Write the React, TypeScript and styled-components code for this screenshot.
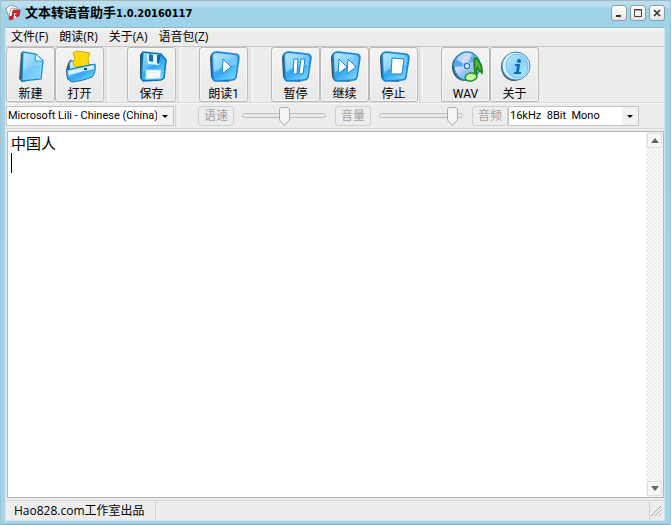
import React, { useState } from "react";
import styled, { createGlobalStyle } from "styled-components";

const GlobalStyle = createGlobalStyle`
  * { box-sizing: border-box; }
  body { margin: 0; background: #9fd2e8; }
  button, select, textarea, input { margin: 0; color: inherit; }
`;

const ui = '"Open Sans", "Noto Sans CJK SC", sans-serif';
const bitmap = 'Roboto, "Noto Sans CJK SC", sans-serif';

const Window = styled.div`
  display: flex;
  flex-direction: column;
  height: 100vh;
  padding: 0 5px 3px 4px;
  border: 1px solid #a4c4d2;
  border-top-color: #a9b4b8;
  border-bottom-color: #8fa5ae;
  border-radius: 3px 3px 2px 2px;
  background: linear-gradient(#b9def0 0, #b9def0 6px, #9ed2e9 7px, #a3d4e9 100%);
  color: #000;
  font: 12px/16px ${ui};
`;

const TitleBar = styled.header`
  display: flex;
  align-items: center;
  flex: none;
  height: 26px;
  padding-bottom: 2px;
`;

const Title = styled.h1`
  display: flex;
  align-items: baseline;
  flex: 1;
  margin: 0 0 0 4px;
  font: bold 13px/20px "Noto Sans CJK SC", sans-serif;
`;

const Version = styled.span`
  font: bold 11px/20px "DejaVu Sans Condensed", "DejaVu Sans", sans-serif;
`;

const WindowButtons = styled.div`
  display: flex;
  gap: 3px;
`;

const WindowButton = styled.button`
  display: grid;
  place-items: center;
  width: 16px;
  height: 16px;
  padding: 0;
  border: 1px solid #8b9da6;
  border-radius: 3px;
  background: linear-gradient(#fff, #e3e5e6);
`;

const Client = styled.main`
  display: flex;
  flex: 1;
  flex-direction: column;
  min-height: 0;
  border: 1px solid #d3e6ee;
  border-top-color: #8bb9cd;
  background: #ececec;
`;

const MenuBar = styled.nav`
  display: flex;
  flex: none;
  gap: 11px;
  height: 19px;
  padding: 0 5px;
  border-bottom: 1px solid #c6c6c6;
  background: linear-gradient(#f9f9f9, #ebebeb 5px);
`;

const MenuItem = styled.button`
  padding: 0;
  border: 0;
  background: none;
  font: 12px/18px ${ui};
`;

const ToolBar = styled.div`
  display: flex;
  flex: none;
  height: 56px;
  border-bottom: 1px solid #d8d8d8;
`;

const Separator = styled.span<{ $gap: number }>`
  align-self: stretch;
  flex: none;
  width: ${(p) => p.$gap}px;
  padding-left: 1px;
  &::before {
    content: "";
    display: block;
    width: 2px;
    height: 100%;
    border-left: 1px solid #d6d6d6;
    border-right: 1px solid #f8f8f8;
  }
`;

const ToolButton = styled.button`
  display: flex;
  flex: none;
  flex-direction: column;
  align-items: center;
  width: 49px;
  height: 55px;
  padding: 2px 0 0;
  border: 1px solid #b9b9b9;
  border-radius: 3px;
  background: linear-gradient(#f4f4f4, #ededed 50%, #e8e8e8);
  box-shadow: inset 0 0 0 1px #f6f6f6;
  font: 12px/20px ${bitmap};
  white-space: nowrap;
  svg { display: block; flex: none; }
`;

const OptionBar = styled.div`
  display: flex;
  align-items: center;
  flex: none;
  height: 26px;
  padding-bottom: 1px;
  border-top: 1px solid #f8f8f8;
  border-bottom: 1px solid #d8d8d8;
`;

const Picker = styled.span<{ $width: number }>`
  display: grid;
  flex: none;
  grid-template-columns: 1fr 16px;
  align-items: center;
  width: ${(p) => p.$width}px;
  height: 20px;
  border: 1px solid #c2c2c2;
  background: #fff;
  select, svg { grid-row: 1; }
  select {
    grid-column: 1 / 3;
    appearance: none;
    width: 100%;
    height: 18px;
    padding: 0 14px 0 1px;
    border: 0;
    outline: 0;
    background: none;
    font: 11px/16px ${bitmap};
  }
  svg { grid-column: 2; pointer-events: none; background: #f2f2f2; }
`;

const MutedButton = styled.button`
  flex: none;
  width: 36px;
  height: 20px;
  padding: 0;
  border: 1px solid #cecece;
  border-radius: 3px;
  background: #ededed;
  color: #a0a0a0;
  font: 12px/16px ${bitmap};
`;

const thumb =
  "url(\"data:image/svg+xml,%3Csvg xmlns='http://www.w3.org/2000/svg' width='11' height='19'%3E%3Cpath d='M2 .5h7l1.500 1.500v11L5.500 18.500 .5 13V2z' fill='%23f5f5f5' stroke='%23a9a9a9'/%3E%3C/svg%3E\")";

const Slider = styled.input`
  flex: none;
  appearance: none;
  width: 84px;
  height: 20px;
  margin: 0 9px 0 8px;
  background: none;
  &::-webkit-slider-runnable-track {
    height: 5px;
    border: 1px solid #bdbdbd;
    border-radius: 3px;
    background: #e9e9e9;
  }
  &::-webkit-slider-thumb {
    appearance: none;
    width: 11px;
    height: 19px;
    margin-top: -7px;
    background: ${thumb} no-repeat;
  }
`;

const Editor = styled.section`
  position: relative;
  display: flex;
  flex: 1;
  min-height: 0;
  margin: 2px 0 0 1px;
  border: 1px solid #b4b4b4;
  background: #fff;
`;

const TextBox = styled.textarea`
  flex: 1;
  min-width: 0;
  padding: 1px 3px;
  border: 0;
  outline: 0;
  resize: none;
  overflow: hidden;
  background: none;
  caret-color: transparent;
  font: 15px/20px ${ui};
`;

const Caret = styled.span`
  position: absolute;
  top: 21px;
  left: 3px;
  width: 1px;
  height: 20px;
  background: #000;
`;

const ScrollTrack = styled.div`
  display: flex;
  flex: none;
  flex-direction: column;
  justify-content: space-between;
  width: 17px;
  padding: 1px;
  background: repeating-conic-gradient(#ededed 0 25%, #f8f8f8 0 50%) 0 0 / 4px 4px;
`;

const ScrollButton = styled.button`
  display: grid;
  place-items: center;
  height: 15px;
  padding: 0;
  border: 1px solid #dedede;
  border-radius: 2px;
  background: #f6f6f6;
`;

const StatusBar = styled.footer`
  display: flex;
  flex: none;
  justify-content: space-between;
  height: 20px;
  margin-top: 2px;
  border-top: 1px solid #d6d6d6;
`;

const StatusText = styled.span`
  padding: 0 10px 0 8px;
  border-right: 1px solid #d0d0d0;
  font: 12px/20px ${ui};
`;

const Grip = styled.span`
  display: flex;
  align-items: flex-end;
  padding: 0 2px 3px 0;
  border-left: 1px solid #d0d0d0;
`;

function Icon({ children }: { children: React.ReactNode }) {
  return (
    <svg width="34" height="34" viewBox="0 0 34 34" aria-hidden="true">
      {children}
    </svg>
  );
}

function Gradients() {
  return (
    <svg width="0" height="0" aria-hidden="true">
      <defs>
        <linearGradient id="blue" x1="0" y1="0" x2=".8" y2="1">
          <stop offset="0" stopColor="#a5e2ff" />
          <stop offset=".4" stopColor="#62c3fa" />
          <stop offset=".55" stopColor="#2fa5f2" />
          <stop offset="1" stopColor="#7fdcff" />
        </linearGradient>
        <linearGradient id="paper" x1="0" y1="0" x2="1" y2="1">
          <stop offset="0" stopColor="#c8eeff" />
          <stop offset=".5" stopColor="#83cffa" />
          <stop offset="1" stopColor="#b9f0ff" />
        </linearGradient>
        <linearGradient id="disc" x1="0" y1="0" x2="1" y2="1">
          <stop offset="0" stopColor="#7fc6f5" />
          <stop offset=".35" stopColor="#d9dcff" />
          <stop offset=".6" stopColor="#8fbdf2" />
          <stop offset="1" stopColor="#bdf0ff" />
        </linearGradient>
      </defs>
    </svg>
  );
}

function Tile({ children }: { children: React.ReactNode }) {
  return (
    <Icon>
      <path d="M7 2 Q3 4 3 8 L4 26 Q4 29 8 31 L24 32 L9 28Z" fill="#3c4b55" />
      <path d="M10 2 L28 4 Q32 4 32 8 L29 27 Q28 30 25 30 L9 31 Q6 31 6 28 L5 6 Q5 2 10 2Z" fill="url(#blue)" stroke="#1684d2" strokeWidth="1.500" />
      <path d="M10 4 L27 5 Q31 6 30 9 L29 15 Q17 15 7 22 L7 7 Q7 4 10 4Z" fill="#d9f4ff" opacity=".4" />
      {children}
    </Icon>
  );
}

const glyph = { fill: "#fff", stroke: "#1985cf" };

const icons = {
  file: (
    <Icon>
      <path d="M7 2 L5 29 L8 32 L13 31 L9 3Z" fill="#4e5a62" />
      <path d="M9 2 L22 4 L29 11 L27 29 L8 31Z" fill="url(#paper)" stroke="#168bd2" strokeWidth="1.300" />
      <path d="M22 4 L21 11 L29 11Z" fill="#eafaff" stroke="#279ce0" />
      <path d="M9 21 Q17 14 27 15 L26 28 L9 30Z" fill="#55bcf7" opacity=".4" />
    </Icon>
  ),
  open: (
    <Icon>
      <path d="M5 13 L8 9 L10 20 L9 32 L4 29 L3 20Z" fill="#4a5a65" />
      <path d="M6 13 Q8 10 12 11 L28 15 Q31 16 31 19 L7 22Z" fill="#bdeaff" stroke="#1680be" />
      <path d="M10 3 L14 1 L27 3 L25 8 L26 16 L12 17 L10 13 L12 8Z" fill="#ffd90c" stroke="#d3a900" />
      <path d="M4 20 Q16 17 32 14 Q33 23 29 27 Q20 31 9 32 Q3 30 4 20Z" fill="url(#blue)" stroke="#0d79bf" />
      <path d="M5 21 Q18 18 31 15 L31 19 Q20 21 6 25Z" fill="#d6f4ff" />
      <path d="M21 19h3" stroke="#064f82" strokeWidth="2" />
    </Icon>
  ),
  save: (
    <Icon>
      <path d="M7 2 L5 5 L5 28 L9 31 L20 31 L9 26Z" fill="#3c4b55" />
      <path d="M8 2 L26 4 L31 10 L29 28 L26 30 L8 31 L6 28Z" fill="url(#blue)" stroke="#0875bd" strokeWidth="1.500" />
      <path d="M12 4 L25 5 L24 15 L13 14Z" fill="#def5ff" />
      <path d="M14 4 L18 5 L18 12 L14 11Z M22 5 L26 5 L24 14 L22 13Z" fill="#1768a8" />
      <path d="M11 20 L26 20 L25 28 L11 29Z" fill="#fff" stroke="#a5dcf7" />
      <path d="M13 23h11M13 26h10" stroke="#d2e9f5" />
    </Icon>
  ),
  play: <Tile><path d="M16 9 L24 17 L15 24Z" {...glyph} /></Tile>,
  pause: <Tile><path d="M15 9 L19 9 L18 24 L14 24Z M22 9 L26 9 L24 24 L20 24Z" {...glyph} /></Tile>,
  next: <Tile><path d="M11 9 L19 17 L10 24Z M20 9 L28 17 L19 24Z" {...glyph} /></Tile>,
  stop: <Tile><path d="M15 8 L27 9 L25 24 L14 24Z" {...glyph} /></Tile>,
  wav: (
    <Icon>
      <ellipse cx="16" cy="17" rx="13" ry="14" fill="#3c4f5c" />
      <ellipse cx="18" cy="16" rx="13" ry="14" fill="url(#disc)" stroke="#2a8fd0" strokeWidth="1.500" />
      <path d="M18 16 L7 9 Q5 12 5 17Z" fill="#5aa9ee" />
      <path d="M18 16 L23 4 L28 8Z" fill="#5eb0ed" />
      <ellipse cx="18" cy="16" rx="4" ry="4" fill="#2c78ca" stroke="#b8e2ff" />
      <circle cx="18" cy="16" r="2" fill="#d9f2ff" />
      <path d="M26 28 L25 9 L27 8 Q34 14 33 23 L28 18 L27 28Z" fill="#46b53c" stroke="#197d1a" strokeWidth="1.500" />
      <ellipse cx="22" cy="27" rx="6" ry="4" fill="#c8f5a8" stroke="#209322" strokeWidth="1.500" transform="rotate(-10 22 27)" />
    </Icon>
  ),
  about: (
    <Icon>
      <ellipse cx="16" cy="17" rx="13" ry="14" fill="#4c5a64" />
      <ellipse cx="18" cy="16" rx="14" ry="14" fill="#d9f3ff" stroke="#3689c0" />
      <ellipse cx="19" cy="16" rx="11" ry="12" fill="url(#paper)" stroke="#79b9e2" />
      <circle cx="21" cy="11" r="2" fill="#116cae" />
      <path d="M17 14h5l-1 8h2v2h-7v-2h2l1-6h-2z" fill="#116cae" />
    </Icon>
  ),
};

const groups: { icon: keyof typeof icons; label: string }[][] = [
  [{ icon: "file", label: "新建" }, { icon: "open", label: "打开" }],
  [{ icon: "save", label: "保存" }],
  [{ icon: "play", label: "朗读1" }],
  [{ icon: "pause", label: "暂停" }, { icon: "next", label: "继续" }, { icon: "stop", label: "停止" }],
  [{ icon: "wav", label: "WAV" }, { icon: "about", label: "关于" }],
];

const menus = ["文件(F)", "朗读(R)", "关于(A)", "语音包(Z)"];

function DropArrow() {
  return (
    <svg width="16" height="18" viewBox="0 0 16 18" aria-hidden="true">
      <path d="M5 8h6L8 11z" fill="#000" />
    </svg>
  );
}

export default function App() {
  const [text, setText] = useState("中国人\n");
  return (
    <Window>
      <GlobalStyle />
      <TitleBar>
        <svg width="16" height="16" viewBox="0 0 16 16" aria-hidden="true">
          <path d="M1 4 L5 0 L12 2 L10 12 L4 12Z" fill="#f7f7fa" stroke="#8e9daa" />
          <path d="M6 3 L13 4 L15 8 L11 14 L4 11Z" fill="#fff" stroke="#b9a5aa" />
          <path d="M8 5 L15 5 L14 11 Q11 13 10 10 L12 9 L12 8 L9 8 L8 14 Q4 16 4 13 Q4 11 7 11Z" fill="#d8262e" stroke="#8d1018" strokeWidth=".6" />
        </svg>
        <Title>文本转语音助手<Version>1.0.20160117</Version></Title>
        <WindowButtons>
          <WindowButton aria-label="Minimize">
            <svg width="10" height="10"><path d="M2 7h5v2H2z" fill="#333" /></svg>
          </WindowButton>
          <WindowButton aria-label="Maximize">
            <svg width="10" height="10"><path d="M1.500 1.500h7v7h-7zM1 2h8" fill="none" stroke="#444" /></svg>
          </WindowButton>
          <WindowButton aria-label="Close">
            <svg width="10" height="10"><path d="M2 2l6 6M8 2l-6 6" stroke="#333" strokeWidth="1.700" /></svg>
          </WindowButton>
        </WindowButtons>
      </TitleBar>
      <Client>
        <MenuBar>
          {menus.map((m) => <MenuItem key={m}>{m}</MenuItem>)}
        </MenuBar>
        <ToolBar>
          {groups.map((group, i) => (
            <React.Fragment key={group[0].label}>
              {i > 0 && <Separator $gap={23} />}
              {group.map((b) => (
                <ToolButton key={b.label}>{icons[b.icon]}{b.label}</ToolButton>
              ))}
            </React.Fragment>
          ))}
        </ToolBar>
        <OptionBar>
          <Picker $width={168}>
            <select aria-label="Voice"><option>Microsoft Lili - Chinese (China)</option></select>
            <DropArrow />
          </Picker>
          <Separator $gap={24} />
          <MutedButton disabled>语速</MutedButton>
          <Slider type="range" aria-label="语速" min={0} max={20} defaultValue={10} />
          <MutedButton disabled>音量</MutedButton>
          <Slider type="range" aria-label="音量" min={0} max={20} defaultValue={19} />
          <MutedButton disabled>音频</MutedButton>
          <Picker $width={131}>
            <select aria-label="音频"><option>{"16kHz\u00a0 8Bit\u00a0 Mono"}</option></select>
            <DropArrow />
          </Picker>
        </OptionBar>
        <Editor>
          <TextBox aria-label="Text" value={text} onChange={(e) => setText(e.target.value)} />
          <Caret />
          <ScrollTrack>
            <ScrollButton aria-label="Scroll up">
              <svg width="8" height="5"><path d="M0 5h8L4 0z" fill="#666" /></svg>
            </ScrollButton>
            <ScrollButton aria-label="Scroll down">
              <svg width="8" height="5"><path d="M0 0h8L4 5z" fill="#666" /></svg>
            </ScrollButton>
          </ScrollTrack>
        </Editor>
        <StatusBar>
          <StatusText>Hao828.com工作室出品</StatusText>
          <Grip>
            <svg width="12" height="12"><path d="M1 11L11 1M5 11l6-6M9 11l2-2" stroke="#aaa" /></svg>
          </Grip>
        </StatusBar>
      </Client>
      <Gradients />
    </Window>
  );
}
